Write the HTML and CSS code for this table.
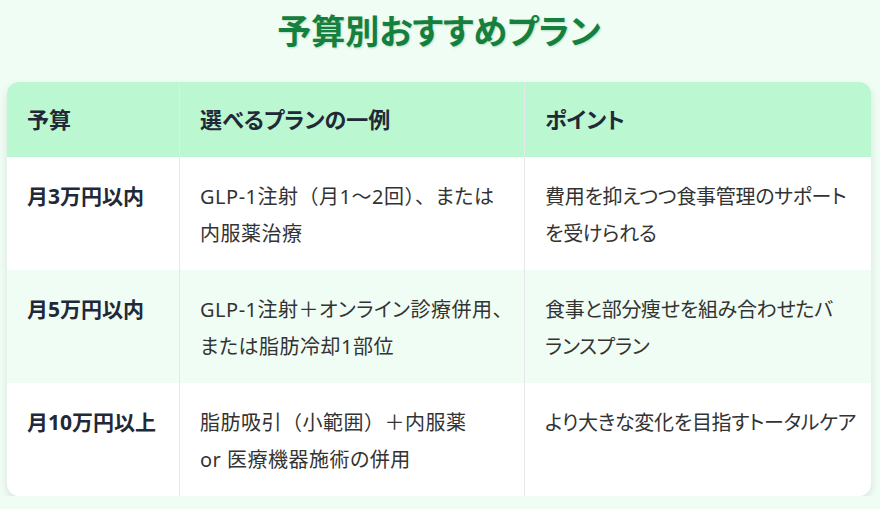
FILE: index.html
```html
<!DOCTYPE html>
<html lang="ja">
<head>
<meta charset="utf-8">
<title>予算別おすすめプラン</title>
<link rel="stylesheet" href="styles.css">
</head>
<body>
<main class="page">
  <h1 class="title">予算別おすすめプラン</h1>
  <div class="card">
    <table class="plans">
      <colgroup>
        <col class="c1"><col class="c2"><col class="c3">
      </colgroup>
      <thead>
        <tr>
          <th>予算</th>
          <th>選べるプランの一例</th>
          <th>ポイント</th>
        </tr>
      </thead>
      <tbody>
        <tr>
          <td class="budget">月3万円以内</td>
          <td class="plan"><span class="ln">GLP-1注射<span class="fw">（</span>月1<span class="fw">〜</span>2回<span class="fw">）、</span>または</span><br><span class="ln">内服薬治療</span></td>
          <td class="point"><span class="ln">費用を抑えつつ食事管理のサポート</span><br><span class="ln">を受けられる</span></td>
        </tr>
        <tr class="alt">
          <td class="budget">月5万円以内</td>
          <td class="plan"><span class="ln">GLP-1注射<span class="fw">＋</span>オンライン診療併用<span class="fw">、</span></span><br><span class="ln">または脂肪冷却1部位</span></td>
          <td class="point"><span class="ln">食事と部分痩せを組み合わせたバ</span><br><span class="ln">ランスプラン</span></td>
        </tr>
        <tr>
          <td class="budget">月10万円以上</td>
          <td class="plan"><span class="ln">脂肪吸引<span class="fw">（</span>小範囲<span class="fw">）＋</span>内服薬</span><br><span class="ln">or 医療機器施術の併用</span></td>
          <td class="point"><span class="ln">より大きな変化を目指すトータルケア</span></td>
        </tr>
      </tbody>
    </table>
  </div>
</main>
</body>
</html>
```
FILE: styles.css
```css
html, body {
  margin: 0;
  padding: 0;
}
body {
  background: #f0fdf4;
  font-family: "Noto Sans", "Noto Sans CJK JP", sans-serif;
  color: #333;
}
.page {
  padding: 0 9px 0 7px;
}
.title {
  margin: 11px 0 30px;
  text-align: center;
  font-size: 34px;
  line-height: 41px;
  font-weight: 700;
  color: #15803d;
  font-feature-settings: "palt";
  text-shadow: 1px 1px 2px rgba(21, 128, 61, 0.25);
}
.card {
  background: #fff;
  border-radius: 12px;
  overflow: hidden;
  box-shadow: 0 4px 8px rgba(0, 0, 0, 0.1);
}
.plans {
  width: 100%;
  border-collapse: separate;
  border-spacing: 0;
  table-layout: fixed;
}
.c1 { width: 172px; }
.c2 { width: 345px; }
.plans th,
.plans td {
  padding: 20px 20px;
  text-align: left;
  vertical-align: top;
}
.plans th + th,
.plans td + td {
  border-left: 1px solid #e5e7eb;
}
.plans th {
  background: #bbf7d0;
  color: #1f2937;
  font-size: 22px;
  font-weight: 700;
  line-height: 35px;
  font-feature-settings: "palt";
}
.plans td {
  font-size: 20px;
  line-height: 37px;
  height: 73px;
  font-feature-settings: "palt";
}
.plans tbody td {
  padding-top: 21px;
  padding-bottom: 18px;
}
.plans td.budget {
  font-size: 21px;
  font-weight: 700;
  color: #1f2937;
}
.plans td.plan {
  letter-spacing: 0.5px;
}
.plans td.point {
  letter-spacing: -0.3px;
}
.fw {
  font-feature-settings: normal;
}
.alt td {
  background: #f0fdf4;
}
.ln {
  white-space: nowrap;
}
```
